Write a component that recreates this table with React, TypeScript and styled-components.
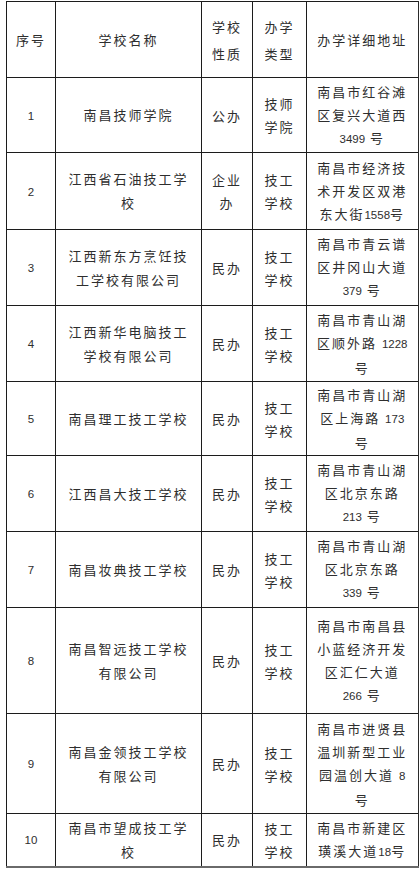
import React from "react";
import styled, { createGlobalStyle } from "styled-components";

const Global = createGlobalStyle`
  html, body { margin: 0; padding: 0; background: #ffffff; }
  body { font-family: "Noto Sans CJK SC", "Noto Sans", sans-serif; }
`;

const Page = styled.div`
  padding: 1px 0 0 6px;
  background: #ffffff;
`;

const Table = styled.table`
  border-collapse: collapse;
  table-layout: fixed;
  width: 413px;
  border-right: 2px solid #2a2a2a;
  border-bottom: 2px solid #6a6a6a;
`;

const Row = styled.tr<{ $h: number }>`
  height: ${(p) => p.$h}px;
`;

const Cell = styled.td<{ $lh?: number }>`
  border: 1px solid #1c1c1c;
  padding: 0 2px;
  text-align: center;
  vertical-align: middle;
  color: #2e2e2e;
  font-family: "Noto Sans CJK SC", "Noto Sans", sans-serif;
  font-size: 13px;
  letter-spacing: 2px;
  line-height: ${(p) => p.$lh ?? 23}px;
  white-space: nowrap;
`;

const HeadCell = styled(Cell).attrs({ as: "th" })`
  font-weight: 400;
`;

const Num = styled.span`
  font-family: "Liberation Sans", Arial, sans-serif;
  font-size: 11.5px;
  letter-spacing: 0;
`;

const Line = styled.span`
  display: block;
`;

type RowData = {
  h: number;
  cells: string[][];
};

const widths = [49, 146, 51, 54, 112];

const header: RowData = {
  h: 76,
  cells: [["序号"], ["学校名称"], ["学校", "性质"], ["办学", "类型"], ["办学详细地址"]],
};

const rows: RowData[] = [
  { h: 75, cells: [["1"], ["南昌技师学院"], ["公办"], ["技师", "学院"], ["南昌市红谷滩", "区复兴大道西", "3499 号"]] },
  { h: 77, cells: [["2"], ["江西省石油技工学", "校"], ["企业", "办"], ["技工", "学校"], ["南昌市经济技", "术开发区双港", "东大街1558号"]] },
  { h: 76, cells: [["3"], ["江西新东方烹饪技", "工学校有限公司"], ["民办"], ["技工", "学校"], ["南昌市青云谱", "区井冈山大道", "379 号"]] },
  { h: 76, cells: [["4"], ["江西新华电脑技工", "学校有限公司"], ["民办"], ["技工", "学校"], ["南昌市青山湖", "区顺外路 1228", "号"]] },
  { h: 74, cells: [["5"], ["南昌理工技工学校"], ["民办"], ["技工", "学校"], ["南昌市青山湖", "区上海路 173", "号"]] },
  { h: 76, cells: [["6"], ["江西昌大技工学校"], ["民办"], ["技工", "学校"], ["南昌市青山湖", "区北京东路", "213 号"]] },
  { h: 76, cells: [["7"], ["南昌妆典技工学校"], ["民办"], ["技工", "学校"], ["南昌市青山湖", "区北京东路", "339 号"]] },
  { h: 106, cells: [["8"], ["南昌智远技工学校", "有限公司"], ["民办"], ["技工", "学校"], ["南昌市南昌县", "小蓝经济开发", "区汇仁大道", "266 号"]] },
  { h: 100, cells: [["9"], ["南昌金领技工学校", "有限公司"], ["民办"], ["技工", "学校"], ["南昌市进贤县", "温圳新型工业", "园温创大道 8", "号"]] },
  { h: 53, cells: [["10"], ["南昌市望成技工学", "校"], ["民办"], ["技工", "学校"], ["南昌市新建区", "璜溪大道18号"]] },
];

function renderText(text: string) {
  const parts = text.split(/(\d+)/).filter((s) => s.length > 0);
  return parts.map((p, i) => (/^\d+$/.test(p) ? <Num key={i}>{p}</Num> : <React.Fragment key={i}>{p}</React.Fragment>));
}

function renderLines(lines: string[]) {
  return lines.map((l, i) => <Line key={i}>{renderText(l)}</Line>);
}

export default function App() {
  return (
    <>
      <Global />
      <Page>
        <Table>
          <colgroup>
            {widths.map((w, i) => (
              <col key={i} style={{ width: w }} />
            ))}
          </colgroup>
          <thead>
            <Row $h={header.h}>
              {header.cells.map((c, i) => (
                <HeadCell key={i} $lh={27}>
                  {renderLines(c)}
                </HeadCell>
              ))}
            </Row>
          </thead>
          <tbody>
            {rows.map((r, ri) => (
              <Row key={ri} $h={r.h}>
                {r.cells.map((c, ci) => (
                  <Cell key={ci} $lh={ci === 1 ? 24 : 23}>
                    {renderLines(c)}
                  </Cell>
                ))}
              </Row>
            ))}
          </tbody>
        </Table>
      </Page>
    </>
  );
}
